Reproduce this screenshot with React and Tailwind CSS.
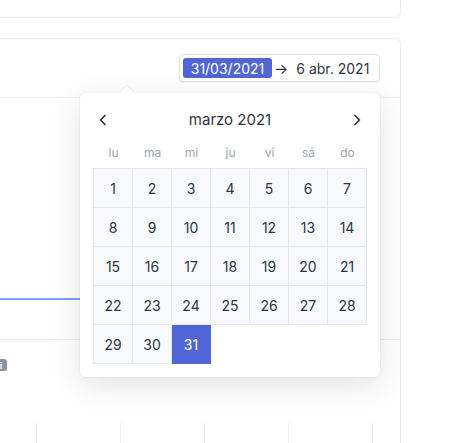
import React from "react";

function Chevron({ dir }) {
  return (
    <svg width="18" height="18" viewBox="0 0 18 18" fill="none">
      {dir === "left" ? (
        <path d="M11 4.5 L6.5 9 L11 13.5" stroke="#2e3447" strokeWidth="1.7" strokeLinecap="round" strokeLinejoin="round" />
      ) : (
        <path d="M7 4.5 L11.5 9 L7 13.5" stroke="#2e3447" strokeWidth="1.7" strokeLinecap="round" strokeLinejoin="round" />
      )}
    </svg>
  );
}

export default function App() {
  const days = Array.from({ length: 31 }, (_, i) => i + 1);
  const week = ["lu", "ma", "mi", "ju", "vi", "sá", "do"];
  return (
    <div className="h-[443px] w-[452px] overflow-hidden bg-white font-['Inter',sans-serif] text-[#2e3447]">
      <div className="w-[401px]">
        <div className="h-[18px] rounded-br-md border-b border-r border-[#e9ecf1]" />
        <div className="mt-[20px] h-[420px] rounded-tr-md border-r border-t border-[#e9ecf1]">
          <div className="flex h-[59px] items-start justify-end border-b border-[#eceef2] pr-[20px] pt-[15px]">
            <div className="relative">
              <div className="flex h-[28px] w-[201px] items-center rounded-[4px] border border-[#dfe3e9] bg-white p-[3px] text-[14px] shadow-[0_1px_2px_rgba(0,0,0,0.06)]">
                <span className="flex h-[20px] w-[89px] items-center justify-center rounded-[3px] bg-[#5066d6] text-white">31/03/2021</span>
                <span className="ml-[2px] text-[15px] leading-none">→</span>
                <span className="ml-[8px]">6 abr. 2021</span>
              </div>
              <div className="absolute right-0 top-[39px] z-10 h-[284px] w-[300px] rounded-[6px] bg-white px-[13px] pb-[13px] pt-[16px] shadow-[0_8px_30px_rgba(20,30,50,0.13),0_0_0_1px_rgba(20,30,50,0.03)]">
                <div className="absolute left-[42px] top-[-5px] h-[10px] w-[10px] rotate-45 bg-white shadow-[-1px_-1px_1px_rgba(20,30,50,0.05)]" />
                <div className="flex h-[22px] items-center justify-between px-px">
                  <Chevron dir="left" />
                  <span className="text-[15px]">marzo 2021</span>
                  <Chevron dir="right" />
                </div>
                <div className="mt-[13px] grid h-[18px] grid-cols-[repeat(7,39px)] pl-px text-[12px] text-[#9aa3b2]">
                  {week.map((w) => (
                    <div key={w} className="flex items-center justify-center">{w}</div>
                  ))}
                </div>
                <div className="mt-[6px] grid w-[274px] grid-cols-[repeat(7,39px)] border-l border-t border-[#e3e8ef]">
                  {days.map((d) => (
                    <div
                      key={d}
                      className={
                        d === 31
                          ? "flex h-[39px] items-center justify-center border-b border-r border-[#5066d6] bg-[#5066d6] text-[14px] text-white"
                          : "flex h-[39px] items-center justify-center border-b border-r border-[#e3e8ef] bg-[#f7f9fc] text-[14px]"
                      }
                    >
                      {d}
                    </div>
                  ))}
                </div>
              </div>
            </div>
          </div>
          <div className="h-[242px] border-b border-[#eceef2]">
            <svg width="400" height="241" className="block">
              <line x1="0" y1="201" x2="320" y2="201" stroke="#5b7bef" strokeWidth="1.5" />
            </svg>
          </div>
          <div className="pt-[19px]">
            <div className="-ml-[5px] flex h-[12px] w-[12px] items-center justify-center rounded-[3px] bg-[#8b94a3] text-[9px] font-bold leading-none text-white">i</div>
          </div>
          <div className="mt-[52px] flex h-[30px] pl-[36px]">
            {[0, 1, 2, 3, 4].map((i) => (
              <div key={i} className="h-full w-[84px] shrink-0 border-l border-[#eceef2]" />
            ))}
          </div>
        </div>
      </div>
    </div>
  );
}
